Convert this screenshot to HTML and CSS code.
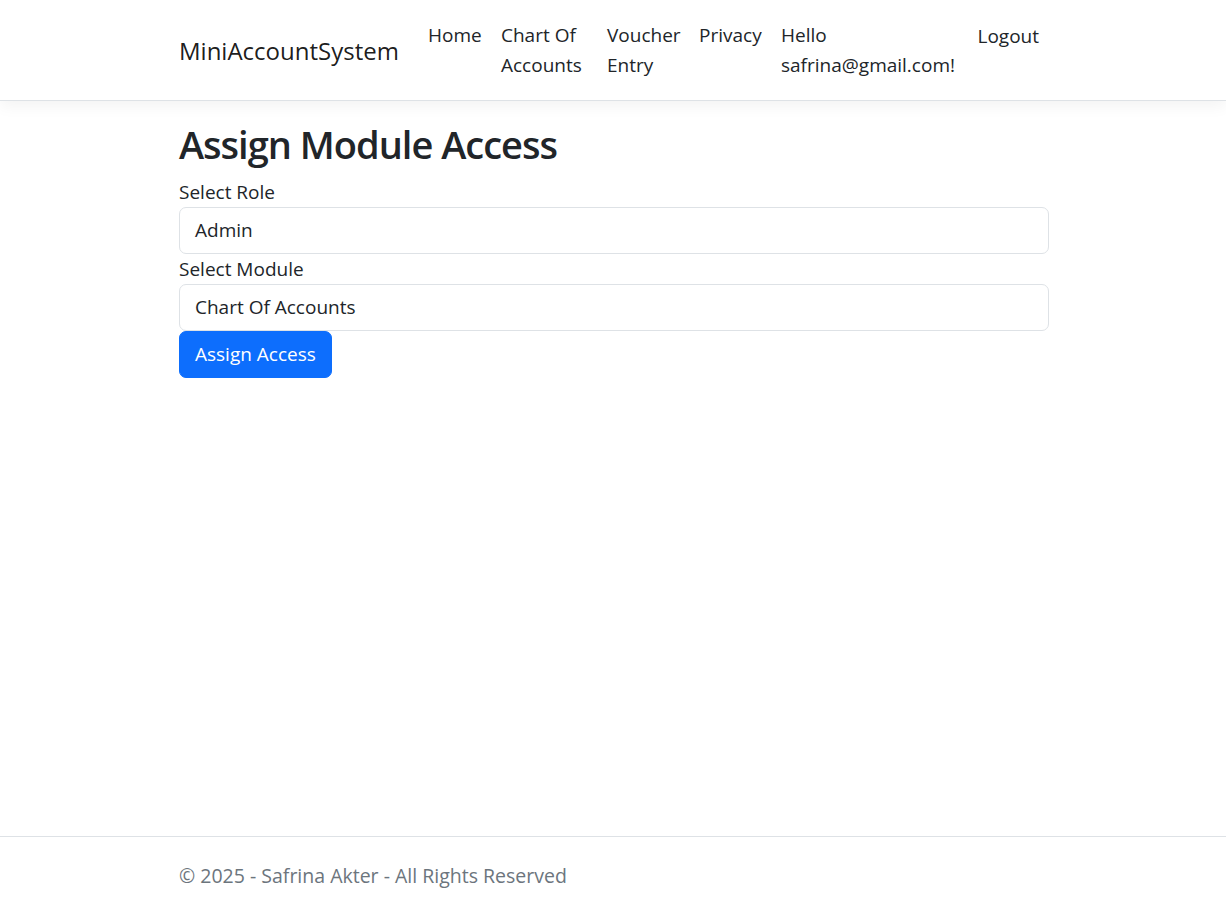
FILE: index.html
```html
<!DOCTYPE html>
<html lang="en">
<head>
<meta charset="utf-8">
<title>Assign Module Access - MiniAccountSystem</title>
<link rel="stylesheet" href="styles.css">
</head>
<body>
<header>
  <nav class="navbar">
    <div class="container nav-inner">
      <a class="brand" href="#">MiniAccountSystem</a>
      <ul class="nav-list nav-main">
        <li class="nav-item item-home"><a class="nav-link" href="#">Home</a></li>
        <li class="nav-item item-chart"><a class="nav-link" href="#">Chart Of Accounts</a></li>
        <li class="nav-item item-voucher"><a class="nav-link" href="#">Voucher Entry</a></li>
        <li class="nav-item item-privacy"><a class="nav-link" href="#">Privacy</a></li>
        <li class="nav-item item-hello"><a class="nav-link" href="#">Hello safrina@gmail.com!</a></li>
      </ul>
      <ul class="nav-list nav-user">
        <li class="nav-item"><button class="nav-link logout" type="button">Logout</button></li>
      </ul>
    </div>
  </nav>
</header>
<main class="container main">
  <h1 class="title">Assign Module Access</h1>
  <form class="form">
    <label class="label" for="role">Select Role</label>
    <div class="control" id="role">Admin</div>
    <label class="label" for="module">Select Module</label>
    <div class="control" id="module">Chart Of Accounts</div>
    <button class="btn" type="button">Assign Access</button>
  </form>
</main>
<footer class="footer">
  <div class="container footer-inner">&copy; 2025 - Safrina Akter - All Rights Reserved</div>
</footer>
</body>
</html>
```

FILE: styles.css
```css
* { box-sizing: border-box; }
html, body { margin: 0; padding: 0; height: 100%; }
body {
  font-family: "Open Sans", "Noto Sans", "DejaVu Sans", sans-serif;
  font-size: 19px;
  line-height: 30px;
  color: #212529;
  background: #fff;
  position: relative;
  min-height: 911px;
}
.container { width: 870px; margin-left: calc(50% - 434px); margin-right: auto; }

.navbar {
  background: #fff;
  border-bottom: 1px solid #dee2e6;
  box-shadow: 0 5px 15px rgba(0,0,0,.05);
  padding: 10px 0;
  margin-bottom: 20px;
}
.nav-inner { display: flex; align-items: center; }
.brand {
  font-size: 24px;
  line-height: 37px;
  color: rgba(0,0,0,.9);
  text-decoration: none;
  margin-right: 20px;
  width: 219px;
  white-space: nowrap;
}
.nav-list { list-style: none; margin: 0; padding: 0; display: flex; align-self: stretch; }
.nav-main { flex: 1; }
.nav-link {
  display: block;
  padding: 10px 10px;
  color: #212529;
  text-decoration: none;
}
.item-home { width: 73px; }
.item-chart { width: 106px; }
.item-voucher { width: 92px; }
.item-privacy { width: 82px; }
.item-hello { width: 196px; }
.logout {
  background: none;
  border: 0;
  font: inherit;
  line-height: 30px;
  padding: 11px 10px 10px;
  cursor: pointer;
}

.main { padding-top: 1px; }
.title {
  font-size: 38px;
  font-weight: 600;
  letter-spacing: -1px;
  line-height: 50px;
  margin: -3px 0 8px;
  color: #212529;
}
.form { display: flex; flex-direction: column; align-items: flex-start; }
.label { display: block; line-height: 30px; }
.control {
  width: 100%;
  height: 47px;
  border: 1px solid #dee2e6;
  border-radius: 7px;
  padding: 7px 15px;
  line-height: 31px;
  background: #fff;
}
.btn {
  font: inherit;
  line-height: 31px;
  color: #fff;
  background: #0d6efd;
  border: 1px solid #0d6efd;
  border-radius: 7px;
  padding: 7px 15px;
  height: 47px;
  cursor: pointer;
}

.footer {
  position: absolute;
  left: 0;
  right: 0;
  bottom: 0;
  border-top: 1px solid #dee2e6;
  padding-top: 4px;
  line-height: 70px;
  font-size: 19.5px;
  color: #6c757d;
  white-space: nowrap;
}
```
